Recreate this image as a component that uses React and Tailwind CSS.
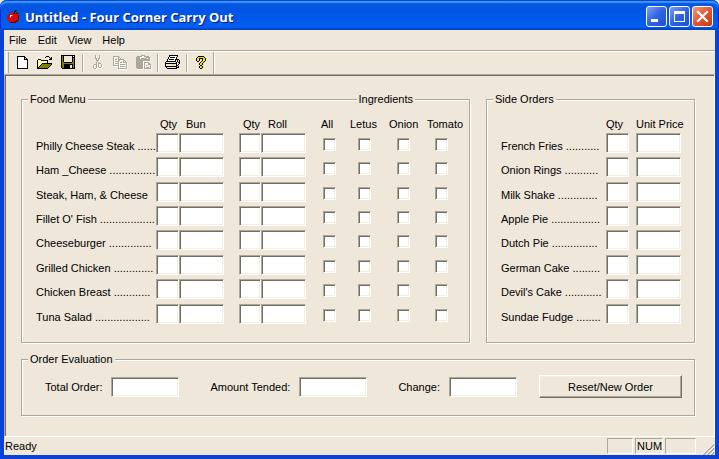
import React from "react";

const COLORS = {
  "#": "#000000",
  o: "#ffffff",
  y: "#ffff66",
  Y: "#f4e400",
  d: "#808000",
  b: "#eee7da",
};

// Draws a small bitmap, one character for each pixel.
function PixelIcon({ rows, disabled = false }) {
  const width = Math.max(...rows.map((r) => r.length));
  const cells = [];
  rows.forEach((row, y) =>
    [...row].forEach((c, x) => {
      if (c !== ".") cells.push({ x, y, c });
    })
  );
  return (
    <svg
      width={width + 1}
      height={rows.length + 1}
      viewBox={`0 0 ${width + 1} ${rows.length + 1}`}
      shapeRendering="crispEdges"
      aria-hidden="true"
      className="shrink-0"
    >
      {disabled &&
        cells.map(({ x, y }) => (
          <rect key={`s${x}-${y}`} x={x + 1} y={y + 1} width="1" height="1" fill="#ffffff" />
        ))}
      {cells.map(({ x, y, c }) => (
        <rect key={`${x}-${y}`} x={x} y={y} width="1" height="1" fill={disabled ? "#aca899" : COLORS[c]} />
      ))}
    </svg>
  );
}

const ICONS = {
  new: [
    "########...",
    "#oooooo##..",
    "#oooooo#o#.",
    "#oooooo####",
    "#ooooooooo#",
    "#ooooooooo#",
    "#ooooooooo#",
    "#ooooooooo#",
    "#ooooooooo#",
    "#ooooooooo#",
    "#ooooooooo#",
    "#ooooooooo#",
    "###########",
  ],
  open: [
    ".........###....",
    "........#...#.#.",
    ".............##.",
    ".###........###.",
    "#yoy#######.....",
    "#oyoyoyoyo#.....",
    "#yoyoyoyoy#.....",
    "#oyoy##########.",
    "#yoy#ddddddddd#.",
    "#oy#ddddddddd#..",
    "#y#ddddddddd#...",
    "##ddddddddd#....",
    "###########.....",
  ],
  save: [
    "##############",
    "#d#bbbbbbbb#b#",
    "#d#bbbbbbbb###",
    "#d#bbbbbbbb#d#",
    "#d#bbbbbbbb#d#",
    "#d#bbbbbbbb#d#",
    "#d#bbbbbbbb#d#",
    "#dd########dd#",
    "#dddddddddddd#",
    "#dd#########d#",
    "#dd######bb#d#",
    "#dd######bb#d#",
    "#dd######bb#d#",
    ".#############",
  ],
  cut: [
    "..#...#..",
    "..#...#..",
    "..#...#..",
    "..##.##..",
    "...#.#...",
    "...###...",
    "....#....",
    "...#.#...",
    "...#.###.",
    ".###.#..#",
    "#..#.#..#",
    "#..#.#..#",
    "#..#..##.",
    ".##......",
  ],
  copy: [
    "######.........",
    "#....##........",
    "#....#.#.......",
    "#.##.######....",
    "#....##...##...",
    "#.####....#.#..",
    "#....#.##.####.",
    "#.####.......#.",
    "#....#.#####.#.",
    "######.......#.",
    ".....#.#####.#.",
    ".....#.......#.",
    ".....#########.",
  ],
  paste: [
    ".....####......",
    ".#####..#####..",
    "####......####.",
    "####.######.##.",
    "##############.",
    "##############.",
    "#######........",
    "#######.#####..",
    "#######.#...##.",
    "#######.#...###",
    "#######.#.#...#",
    "#######.#.....#",
    "#######.#.###.#",
    ".######.#######",
  ],
  print: [
    "....#########..",
    "....#ooooooo#..",
    "...#o#####o#...",
    "...#ooooooo#...",
    "..#o#####o####.",
    "..#ooooooo#b#b#",
    ".##########b#b#",
    "#bbbbbbbbbb#b##",
    "############bb#",
    "#bbbbbbYYbb#b#.",
    "#bbbbbbbbbb##..",
    "############b#.",
    ".#bbbbbbbbb###.",
    "..##########...",
  ],
  help: [
    "..######..",
    ".#YYYYYY#.",
    "#YY####YY#",
    "#YY#..#YY#",
    "#YY#..#YY#",
    ".##..#YY#.",
    "....#YY#..",
    "...#YY#...",
    "...#YY#...",
    "....##....",
    "...#YY#...",
    "...#YY#...",
    "....##....",
  ],
};

function Tool({ name, label, disabled }) {
  return (
    <button type="button" aria-label={label} disabled={disabled} className="flex h-[22px] w-[23px] items-center justify-center">
      <PixelIcon rows={ICONS[name]} disabled={disabled} />
    </button>
  );
}

function Separator() {
  return <div className="mx-[2px] h-[18px] w-[2px] border-l border-r border-l-[#aca899] border-r-white" />;
}

const sunken =
  "block h-5 w-full appearance-none rounded-none border border-t-[#aca899] border-l-[#aca899] border-r-white border-b-white bg-white px-1 text-[11px] outline-none shadow-[inset_1px_1px_0_#716f64,inset_-1px_-1px_0_#f1efe2]";

function Field({ label, id }) {
  return <input type="text" id={id} aria-label={label} className={sunken} />;
}

function Tick({ label }) {
  return (
    <input
      type="checkbox"
      aria-label={label}
      className="mt-[5px] block size-[13px] appearance-none border border-t-[#aca899] border-l-[#aca899] border-r-white border-b-white bg-white shadow-[inset_1px_1px_0_#716f64,inset_-1px_-1px_0_#f1efe2] checked:bg-[#716f64]"
    />
  );
}

function Group({ title, extra, children, className }) {
  return (
    <fieldset
      className={`relative min-w-0 border border-[#aca899] shadow-[1px_1px_0_#fff,inset_1px_1px_0_#fff] ${className}`}
    >
      <legend className="relative ml-[6px] bg-[#eee7da] px-[2px] leading-3">{title}</legend>
      {extra}
      {children}
    </fieldset>
  );
}

const FOODS = [
  "Philly Cheese Steak ......",
  "Ham _Cheese ...............",
  "Steak, Ham, & Cheese",
  "Fillet O' Fish ..................",
  "Cheeseburger ..............",
  "Grilled Chicken .............",
  "Chicken Breast ............",
  "Tuna Salad ..................",
];

const SIDES = [
  "French Fries ...........",
  "Onion Rings ...........",
  "Milk Shake .............",
  "Apple Pie ................",
  "Dutch Pie ...............",
  "German Cake .........",
  "Devil's Cake ............",
  "Sundae Fudge ........",
];

const ROW_HEIGHTS = ["h-6", "h-[25px]", "h-6", "h-6", "h-[25px]", "h-6", "h-[25px]", "h-5"];

const nameCell = "pt-[7px] text-left align-top font-normal leading-3 whitespace-nowrap";

function FoodTable() {
  return (
    <table className="w-full table-fixed border-collapse">
      <colgroup>
        <col />
        <col className="w-[23px]" />
        <col className="w-[45px]" />
        <col className="w-[15px]" />
        <col className="w-[22px]" />
        <col className="w-[45px]" />
        <col className="w-[15px]" />
        <col className="w-[29px]" />
        <col className="w-[39px]" />
        <col className="w-[38px]" />
        <col className="w-[41px]" />
      </colgroup>
      <thead>
        <tr className="h-[15px] text-left align-top leading-3 [&>th]:p-0 [&>th]:font-normal [&>th]:whitespace-nowrap">
          <td />
          <th scope="col"><span className="pl-1">Qty</span></th>
          <th scope="col"><span className="pl-[7px]">Bun</span></th>
          <td />
          <th scope="col"><span className="pl-1">Qty</span></th>
          <th scope="col"><span className="pl-[7px]">Roll</span></th>
          <td />
          <th scope="col">All</th>
          <th scope="col">Letus</th>
          <th scope="col">Onion</th>
          <th scope="col">Tomato</th>
        </tr>
      </thead>
      <tbody>
        {FOODS.map((food, i) => (
          <tr key={food} className={`align-top [&>td]:p-0 ${ROW_HEIGHTS[i]}`}>
            <th scope="row" className={nameCell}>
              <label htmlFor={`food-${i}`} className="block h-3">{food}</label>
            </th>
            <td><Field id={`food-${i}`} /></td>
            <td><Field label="Bun" /></td>
            <td />
            <td><Field label="Qty" /></td>
            <td><Field label="Roll" /></td>
            <td />
            <td><div className="pl-[2px]"><Tick label="All" /></div></td>
            <td><div className="pl-2"><Tick label="Letus" /></div></td>
            <td><div className="pl-2"><Tick label="Onion" /></div></td>
            <td><div className="pl-2"><Tick label="Tomato" /></div></td>
          </tr>
        ))}
      </tbody>
    </table>
  );
}

function SideTable() {
  return (
    <table className="w-full table-fixed border-collapse">
      <colgroup>
        <col />
        <col className="w-[23px]" />
        <col className="w-[7px]" />
        <col className="w-[45px]" />
      </colgroup>
      <thead>
        <tr className="h-[15px] text-left align-top leading-3 [&>th]:p-0 [&>th]:font-normal [&>th]:whitespace-nowrap">
          <td />
          <th scope="col">Qty</th>
          <td />
          <th scope="col">Unit Price</th>
        </tr>
      </thead>
      <tbody>
        {SIDES.map((side, i) => (
          <tr key={side} className={`align-top [&>td]:p-0 ${ROW_HEIGHTS[i]}`}>
            <th scope="row" className={nameCell}>
              <label htmlFor={`side-${i}`} className="block h-3">{side}</label>
            </th>
            <td><Field id={`side-${i}`} /></td>
            <td />
            <td><Field label="Unit Price" /></td>
          </tr>
        ))}
      </tbody>
    </table>
  );
}

function Total({ id, label }) {
  return (
    <div className="flex items-center gap-[9px]">
      <label htmlFor={id} className="leading-3 whitespace-nowrap">{label}</label>
      <div className="w-[68px]"><Field id={id} /></div>
    </div>
  );
}

const captionButton =
  "flex size-[21px] items-center justify-center rounded-[3px] border border-white";
const blueButton = "bg-linear-to-br from-[#7ba0f5] via-[#2f62e4] to-[#1f4fd6]";

function TitleBar() {
  return (
    <header className="flex h-[30px] items-center rounded-t-[7px] bg-linear-to-b from-[#0a5be0] from-0% via-[#0054e3] via-35% to-[#0460f4] pt-[3px] pr-[6px] pl-[7px] shadow-[inset_0_1px_0_#0a48c8,inset_0_3px_1px_#3a93ff,inset_0_-2px_1px_#0346c8,inset_1px_0_0_#0019cf,inset_-1px_0_0_#0019cf]">
      <svg width="14" height="15" viewBox="0 0 14 15" shapeRendering="crispEdges" aria-hidden="true">
        <path d="M2 4h3v-1h3v1h3v2h1v5h-1v2h-2v1h-6v-1h-2v-2h-1v-4h1v-2h1z" fill="#d80808" />
        <path d="M9 11h2v-5h1v5h-1v2h-2v1h-6v-1h5v-1h1z" fill="#700000" />
        <path d="M6 4h1v-2h1v-1h2v1h-1v1h-1v2h-2z" fill="#101010" />
        <path d="M9 3h2v1h1v1h-3z" fill="#204010" />
        <path d="M3 6h2v1h-1v1h-1z" fill="#ffffff" />
        <path d="M5 6h1v1h-1zM3 8h1v1h-1z" fill="#ff7070" />
      </svg>
      <h1 className="ml-1 flex-1 truncate font-['Open_Sans','Noto_Sans',sans-serif] text-[13px] leading-5 font-bold text-white [text-shadow:1px_1px_0_#0a1883]">
        Untitled - Four Corner Carry Out
      </h1>
      <div className="flex gap-[2px]">
        <button type="button" aria-label="Minimize" className={`${captionButton} ${blueButton}`}>
          <svg width="19" height="19" viewBox="0 0 19 19" shapeRendering="crispEdges" aria-hidden="true">
            <rect x="4" y="12" width="7" height="3" fill="#fff" />
          </svg>
        </button>
        <button type="button" aria-label="Maximize" className={`${captionButton} ${blueButton}`}>
          <svg width="19" height="19" viewBox="0 0 19 19" shapeRendering="crispEdges" aria-hidden="true">
            <path d="M4 4h11v11h-11zM5 7v7h9v-7z" fill="#fff" fillRule="evenodd" />
          </svg>
        </button>
        <button type="button" aria-label="Close" className={`${captionButton} bg-linear-to-br from-[#f09a80] via-[#e2532f] to-[#c9370f]`}>
          <svg width="19" height="19" viewBox="0 0 19 19" aria-hidden="true">
            <path d="M5 5l9 9M14 5l-9 9" stroke="#fff" strokeWidth="2.2" strokeLinecap="square" />
          </svg>
        </button>
      </div>
    </header>
  );
}

const pane = "h-[16px] border border-t-[#aca899] border-l-[#aca899] border-r-white border-b-white";

export default function App() {
  return (
    <div className="flex min-h-screen flex-col bg-[#ece9d8] font-['Liberation_Sans',Arial,sans-serif] text-[11px] leading-3 text-black">
      <TitleBar />
      <div className="flex flex-1 flex-col border-x-4 border-b-4 border-[#0842d8] bg-[#eee7da]">
        <nav className="flex h-5 items-center gap-[11px] pl-[5px]">
          {["File", "Edit", "View", "Help"].map((item) => (
            <button key={item} type="button" className="leading-4">{item}</button>
          ))}
        </nav>
        <div role="toolbar" aria-label="Standard" className="flex h-6 items-center border-t border-[#aca899] pl-[2px] shadow-[inset_0_1px_0_#fff]">
          <div className="mr-[2px] h-[21px] w-[3px] border-l border-r border-l-white border-r-[#aca899]" />
          <Tool name="new" label="New" />
          <Tool name="open" label="Open" />
          <Tool name="save" label="Save" />
          <Separator />
          <Tool name="cut" label="Cut" disabled />
          <Tool name="copy" label="Copy" disabled />
          <Tool name="paste" label="Paste" disabled />
          <Separator />
          <Tool name="print" label="Print" />
          <Separator />
          <Tool name="help" label="About" />
          <div className="h-[22px] w-[2px] border-l border-r border-l-[#aca899] border-r-white" />
        </div>
        <main className="flex flex-1 flex-col border-t border-r border-b border-l border-t-[#aca899] border-r-white border-b-white border-l-[#aca899] shadow-[inset_1px_1px_0_#716f64]">
          <form className="flex flex-col gap-[10px] pt-[18px] pr-[19px] pl-4" onSubmit={(e) => e.preventDefault()}>
            <div className="grid grid-cols-[449fr_209fr] gap-4">
              <Group
                title="Food Menu"
                className="pr-px pb-[18px]"
                extra={
                  <span className="absolute -top-3 right-[54px] bg-[#eee7da] px-[2px]">Ingredients</span>
                }
              >
                <div className="pt-[13px] pl-[14px]"><FoodTable /></div>
              </Group>
              <Group title="Side Orders" className="pb-[18px]">
                <div className="pt-[13px] pr-[13px] pl-[14px]"><SideTable /></div>
              </Group>
            </div>
            <Group title="Order Evaluation" className="pb-[17px]">
              <div className="flex items-center justify-between gap-4 pt-[10px] pr-3 pl-[23px]">
                <div className="flex items-center gap-[31px]">
                  <Total id="total" label="Total Order:" />
                  <Total id="amount" label="Amount Tended:" />
                  <Total id="change" label="Change:" />
                </div>
                <button
                  type="reset"
                  className="h-[23px] w-[143px] shrink-0 border border-t-white border-r-[#716f64] border-b-[#716f64] border-l-white shadow-[inset_-1px_-1px_0_#aca899,inset_1px_1px_0_#f1efe2]"
                >
                  Reset/New Order
                </button>
              </div>
            </Group>
          </form>
        </main>
        <footer className="flex h-[18px] items-center gap-[2px] pl-px">
          <span className="flex-1">Ready</span>
          <div className={`${pane} w-[26px]`} />
          <div className={`${pane} w-7 pt-px pl-px`}>NUM</div>
          <div className={`${pane} w-[31px]`} />
          <svg width="17" height="16" viewBox="0 0 17 16" className="self-end" aria-hidden="true">
            <path d="M5 16L16 5M9 16l7-7M13 16l3-3" stroke="#aca899" strokeWidth="2" />
            <path d="M4 16L16 4M8 16l8-8M12 16l4-4" stroke="#fff" strokeWidth="1" />
          </svg>
        </footer>
      </div>
    </div>
  );
}
